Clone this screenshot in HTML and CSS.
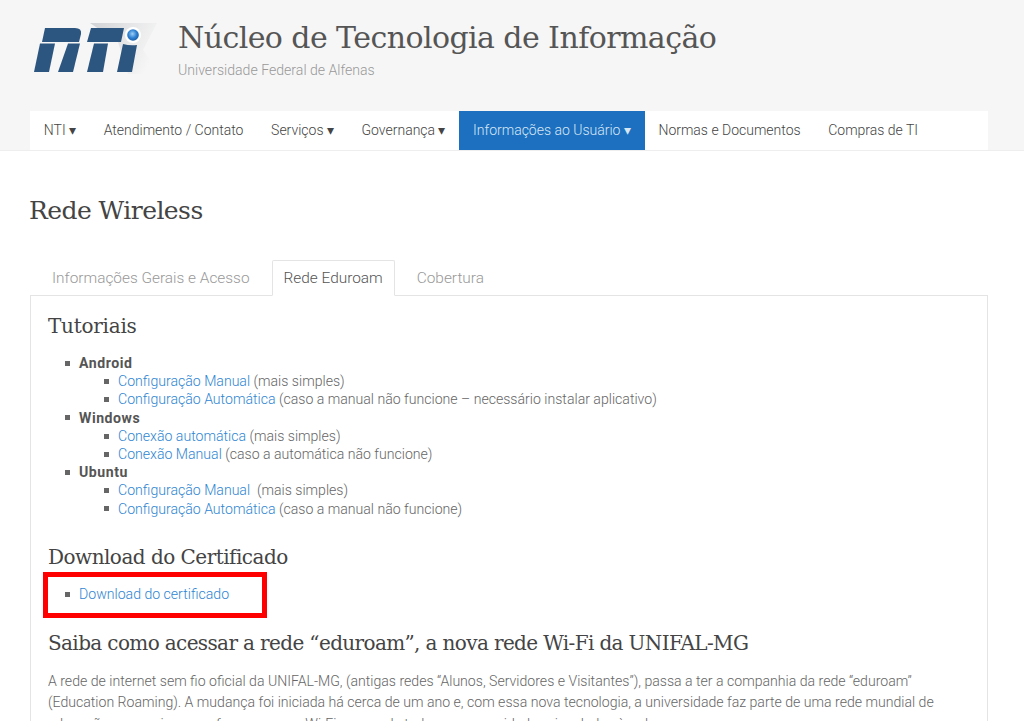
FILE: index.html
```html
<!DOCTYPE html>
<html lang="pt-BR">
<head>
<meta charset="utf-8">
<title>Rede Wireless</title>
<link rel="stylesheet" href="styles.css">
</head>
<body>
<header class="top">
  <div class="brand">
    <svg class="logo" width="130" height="60" viewBox="30 20 130 60">
      <defs>
        <linearGradient id="sh" x1="0" y1="0" x2="1" y2="0.35"><stop offset="0" stop-color="#d2d3d6"/><stop offset="1" stop-color="#f6f6f6"/></linearGradient>
        <radialGradient id="ball" cx="0.45" cy="0.4" r="0.6"><stop offset="0" stop-color="#9fd0f5"/><stop offset="0.6" stop-color="#2f80d2"/><stop offset="1" stop-color="#1c5fa5"/></radialGradient>
      </defs>
      <path d="M90 23H157L143 50L160 74H128L118 42Z" fill="url(#sh)"/>
      <path d="M45 28H75Q82 28 81 34L79 42H42Z" fill="#2c5680"/>
      <path d="M40 43.5H55L49 72H34Z" fill="#2c5680"/>
      <path d="M68 43.5H80L73 72H58Z" fill="#2c5680"/>
      <path d="M91 28H124L121 42H87Z" fill="#2c5680"/>
      <path d="M94 43.5H108L103 72H87Z" fill="#2c5680"/>
      <path d="M123 44Q130 46 137 45L132 72H117Z" fill="#2c5680"/>
      <circle cx="133" cy="35" r="8" fill="#fff"/>
      <circle cx="133" cy="35" r="5.8" fill="url(#ball)"/>
    </svg>
    <div class="brand-text">
      <div class="site-title">Núcleo de Tecnologia de Informação</div>
      <div class="site-sub">Universidade Federal de Alfenas</div>
    </div>
  </div>
  <nav class="nav">
    <a class="nav-item">NTI <span class="caret">▾</span></a>
    <a class="nav-item">Atendimento / Contato</a>
    <a class="nav-item">Serviços <span class="caret">▾</span></a>
    <a class="nav-item">Governança <span class="caret">▾</span></a>
    <a class="nav-item active">Informações ao Usuário <span class="caret">▾</span></a>
    <a class="nav-item">Normas e Documentos</a>
    <a class="nav-item">Compras de TI</a>
  </nav>
</header>
<main class="main">
  <h1 class="page-title">Rede Wireless</h1>
  <div class="tabs">
    <a class="tab">Informações Gerais e Acesso</a>
    <a class="tab current">Rede Eduroam</a>
    <a class="tab">Cobertura</a>
  </div>
  <section class="panel">
    <h2 class="h-tut">Tutoriais</h2>
    <ul class="list">
      <li><b>Android</b>
        <ul class="list sub">
          <li><a>Configuração Manual</a> (mais simples)</li>
          <li><a>Configuração Automática</a> (caso a manual não funcione – necessário instalar aplicativo)</li>
        </ul>
      </li>
      <li><b>Windows</b>
        <ul class="list sub">
          <li><a>Conexão automática</a> (mais simples)</li>
          <li><a>Conexão Manual</a> (caso a automática não funcione)</li>
        </ul>
      </li>
      <li><b>Ubuntu</b>
        <ul class="list sub">
          <li><a>Configuração Manual</a>&nbsp; (mais simples)</li>
          <li><a>Configuração Automática</a> (caso a manual não funcione)</li>
        </ul>
      </li>
    </ul>
    <h3 class="h-dl">Download do Certificado</h3>
    <div class="mark-box">
      <ul class="list flush">
        <li><a>Download do certificado</a></li>
      </ul>
    </div>
    <h3 class="h-saiba">Saiba como acessar a rede “eduroam”, a nova rede Wi-Fi da UNIFAL-MG</h3>
    <p class="para">A rede de internet sem fio oficial da UNIFAL-MG, (antigas redes “Alunos, Servidores e Visitantes”), passa a ter a companhia da rede “eduroam” (Education Roaming). A mudança foi iniciada há cerca de um ano e, com essa nova tecnologia, a universidade faz parte de uma rede mundial de educação e pesquisa que oferece acesso Wi-Fi seguro de todas as comunidades vinculadas à rede.</p>
  </section>
</main>
</body>
</html>
```
FILE: styles.css
```css
html, body { margin: 0; padding: 0; height: 721px; overflow: hidden; background: #fff; }
body { font-family: Roboto, "Liberation Sans", sans-serif; font-size: 14.1px; line-height: 18.2px; color: #666; font-weight: 300; }
.top { background: #f6f6f6; height: 150px; border-bottom: 1px solid #eee; padding: 0 36px 0 30px; }
.brand { display: flex; height: 111px; align-items: flex-start; }
.logo { margin: 20px 18px 0 0; flex: none; }
.brand-text { padding-top: 18px; }
.site-title { font-family: "DejaVu Serif", serif; font-size: 30px; line-height: 40px; color: #555; letter-spacing: -0.57px; }
.site-sub { font-size: 14.1px; line-height: 20px; color: #999; margin-top: 2px; }
.nav { display: flex; background: #fff; height: 39px; }
.nav-item { padding: 0 13.8px; line-height: 38px; color: #444; font-size: 14px; white-space: nowrap; }
.caret { font-weight: 400; }
.nav-item.active { background: #1c70bf; color: #d8e6f4; }
.main { padding: 0 36px 0 30px; }
.page-title { font-family: "DejaVu Serif", serif; font-weight: 400; font-size: 25px; line-height: 30px; color: #444; margin: 45px 0 0 -1px; letter-spacing: -0.55px; }
.tabs { display: flex; margin: 34px 0 0; padding-left: 10px; position: relative; z-index: 1; }
.tab { padding: 0 11px; height: 36px; line-height: 34px; font-size: 15.4px; color: #999; box-sizing: border-box; border: 1px solid transparent; margin-right: 10px; }
.tab.current { color: #555; border-color: #e4e4e4; border-bottom-color: #fff; border-radius: 2px 2px 0 0; background: #fff; }
.panel { border: 1px solid #e4e4e4; padding: 16px 17px 0; margin-top: -1px; }
.h-tut, .h-dl, .h-saiba { font-family: "DejaVu Serif", serif; font-weight: 400; margin: 0; color: #444; }
.h-tut { font-size: 20px; line-height: 28px; letter-spacing: -0.25px; }
.h-dl { font-size: 20px; line-height: 26px; margin-top: 26px; letter-spacing: -0.52px; }
.h-saiba { font-size: 20px; line-height: 26px; margin-top: 12px; letter-spacing: -0.63px; }
.list { list-style: none; margin: 14px 0 0; padding: 0 0 0 31px; }
.list.sub { margin: 0; padding-left: 39px; }
.list.flush { margin: 0; }
.list b { font-weight: 700; color: #555; letter-spacing: 0.55px; }
.list a { color: #2f86d2; }
.list li { color: #666; }
.list li::before { content: ""; display: inline-block; width: 5px; height: 5px; margin: 0 9px 2px -14px; vertical-align: middle; background: #666; }
.mark-box { box-sizing: border-box; width: 224px; height: 46px; border: 5px solid #f00; margin: 2px 0 0 -5px; padding: 8px 0 0; }
.para { margin: 15px 0 0; color: #666; line-height: 21.5px; }
```
